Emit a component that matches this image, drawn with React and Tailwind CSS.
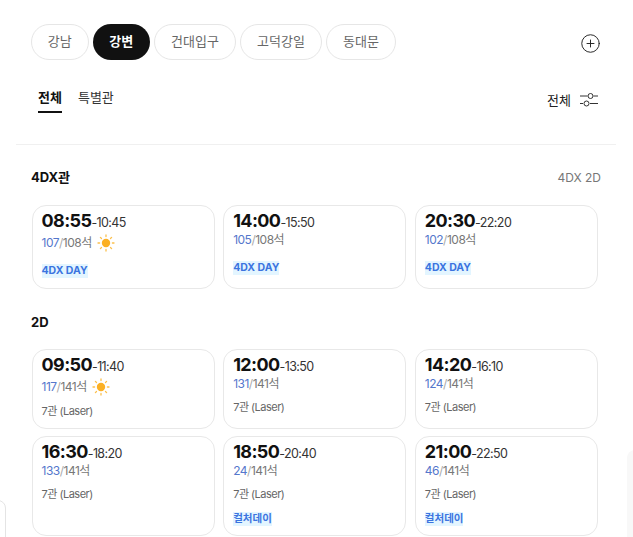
import { CirclePlus } from 'lucide-react';

const pills = [
  { name: '강남', w: 'w-[57.5px]' },
  { name: '강변', w: 'w-[57.5px]', active: true },
  { name: '건대입구', w: 'w-[82px]' },
  { name: '고덕강일', w: 'w-[82px]' },
  { name: '동대문', w: 'w-[70px]' },
];

const sun = (
  <svg width="18" height="18" viewBox="0 0 18 18" className="ml-[5px]">
    <circle cx="9" cy="9" r="4.2" fill="#fbb024" />
    <g stroke="#fbc04d" strokeWidth="1.3" strokeLinecap="round">
      <path d="M9 1v1.6M9 15.4V17M1 9h1.6M15.4 9H17M3.4 3.4l1.1 1.1M13.5 13.5l1.1 1.1M3.4 14.6l1.1-1.1M13.5 4.5l1.1-1.1" />
    </g>
  </svg>
);

const FilterIcon = () => (
  <svg width="20" height="20" viewBox="0 0 20 20" fill="none" stroke="#333" strokeWidth="1">
    <path d="M1 6h7.5M14.5 6h4.5M1 13.5h3M11 13.5h8" />
    <circle cx="11.5" cy="6" r="2.5" />
    <circle cx="7.5" cy="13.5" r="2.5" />
  </svg>
);

const Card = ({ start, end, left, total, hall, sunny, tag, height }) => (
  <div className={`border border-[#e8e8e8] rounded-[14px] bg-white pl-[9px] pt-[4px] ${height}`}>
    <div className="flex items-baseline h-[22px]">
      <span className="text-[18px] tracking-[-0.6px] font-bold text-[#111] leading-[22px]">{start}</span>
      <span className="text-[12.5px] text-[#333] tracking-[-0.6px]">-{end}</span>
    </div>
    <div className={`flex items-center text-[12px] tracking-[-0.5px] text-[#777] ${sunny ? 'h-[22px]' : 'h-[16px]'}`}>
      <span className="text-[#5577cc]">{left}</span>
      <span className="text-[#aaa]">/</span>
      <span>{total}석</span>
      {sunny && sun}
    </div>
    {hall && (
      <div className={`text-[11px] tracking-[-0.5px] text-[#666] leading-[16px] ${sunny ? 'mt-[5px]' : 'mt-[7px]'}`}>
        {hall}
      </div>
    )}
    {tag && (
      <div className={hall ? 'mt-[7px] leading-[14px]' : sunny ? 'mt-[7px] leading-[14px]' : 'mt-[10px] leading-[14px]'}>
        <span className="bg-[#e3f5ff] text-[#3b74e0] text-[10.5px] font-bold inline-block leading-[14px]">{tag}</span>
      </div>
    )}
  </div>
);

const dx = [
  { start: '08:55', end: '10:45', left: 107, total: 108, sunny: true, tag: '4DX DAY' },
  { start: '14:00', end: '15:50', left: 105, total: 108, tag: '4DX DAY' },
  { start: '20:30', end: '22:20', left: 102, total: 108, tag: '4DX DAY' },
];

const twoD = [
  { start: '09:50', end: '11:40', left: 117, total: 141, sunny: true, hall: '7관 (Laser)' },
  { start: '12:00', end: '13:50', left: 131, total: 141, hall: '7관 (Laser)' },
  { start: '14:20', end: '16:10', left: 124, total: 141, hall: '7관 (Laser)' },
  { start: '16:30', end: '18:20', left: 133, total: 141, hall: '7관 (Laser)' },
  { start: '18:50', end: '20:40', left: 24, total: 141, hall: '7관 (Laser)', tag: '컬처데이' },
  { start: '21:00', end: '22:50', left: 46, total: 141, hall: '7관 (Laser)', tag: '컬처데이' },
];

export default function App() {
  return (
    <div className="relative h-[537px] w-[633px] overflow-hidden bg-white font-['Inter','Noto_Sans_CJK_KR',sans-serif]">
      <div className="flex items-center justify-between pl-[31px] pr-[32px] pt-[24px]">
        <div className="flex gap-[4px]">
          {pills.map((p) => (
            <button
              key={p.name}
              className={`h-[36px] rounded-full text-[13px] ${p.w} ${
                p.active ? 'bg-[#111] text-white font-bold' : 'border border-[#e6e6e6] text-[#666]'
              }`}
            >
              {p.name}
            </button>
          ))}
        </div>
        <CirclePlus size={21} strokeWidth={1.1} className="text-[#222] mt-[2px]" />
      </div>

      <div className="flex items-start justify-between pl-[38px] pr-[34px] mt-[27px] h-[57px]">
        <div className="flex gap-[16px]">
          <div>
            <div className="text-[13px] font-bold text-[#111] leading-[20px]">전체</div>
            <div className="h-[2px] bg-[#111] mt-[4px]" />
          </div>
          <div className="text-[13px] text-[#333] leading-[20px]">특별관</div>
        </div>
        <div className="flex items-center gap-[8px] text-[13px] text-[#222] leading-[20px] mt-[3px]">
          전체
          <FilterIcon />
        </div>
      </div>

      <div className="h-px bg-[#f0f0f0] mx-[16px] w-[600px]" />

      <div className="pl-[31px] pr-[32px]">
        <div className="flex items-center justify-between h-[20px] mt-[23px]">
          <span className="text-[13px] font-bold text-[#111]">4DX관</span>
          <span className="text-[12px] text-[#777]">4DX 2D</span>
        </div>
        <div className="grid grid-cols-3 gap-x-[8.5px] mt-[17px] ml-[0.5px] mr-[3px]">
          {dx.map((c) => (
            <Card key={c.start} {...c} height="h-[84px]" />
          ))}
        </div>

        <div className="h-[20px] mt-[24px] flex items-center text-[13px] font-bold text-[#111]">2D</div>
        <div className="grid grid-cols-3 gap-x-[8.5px] gap-y-[7px] mt-[16px] ml-[0.5px] mr-[3px]">
          {twoD.map((c, i) => (
            <Card key={c.start} {...c} height={i < 3 ? 'h-[80px]' : 'h-[100px]'} />
          ))}
        </div>
      </div>

      <div className="absolute left-[-20px] top-[500px] h-[60px] w-[26px] rounded-[8px] border border-[#e4e4e4] bg-white" />
      <div className="absolute left-[627px] top-[450px] h-[100px] w-[30px] rounded-[8px] bg-[#f8f8f8]" />
    </div>
  );
}
